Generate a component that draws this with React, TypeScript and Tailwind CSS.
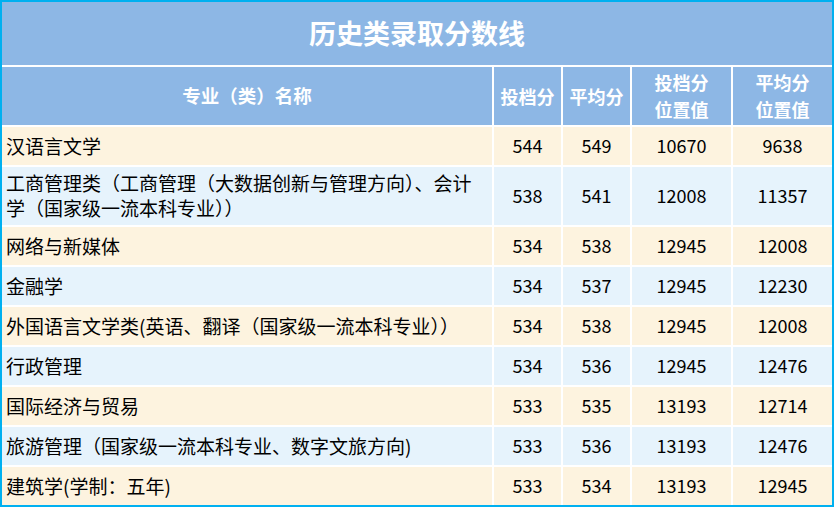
const rows = [
  { name: '汉语言文学', a: '544', b: '549', c: '10670', d: '9638' },
  { name: '工商管理类（工商管理（大数据创新与管理方向）、会计\n学（国家级一流本科专业））', a: '538', b: '541', c: '12008', d: '11357', tall: true },
  { name: '网络与新媒体', a: '534', b: '538', c: '12945', d: '12008' },
  { name: '金融学', a: '534', b: '537', c: '12945', d: '12230' },
  { name: '外国语言文学类(英语、翻译（国家级一流本科专业））', a: '534', b: '538', c: '12945', d: '12008' },
  { name: '行政管理', a: '534', b: '536', c: '12945', d: '12476' },
  { name: '国际经济与贸易', a: '533', b: '535', c: '13193', d: '12714' },
  { name: '旅游管理（国家级一流本科专业、数字文旅方向)', a: '533', b: '536', c: '13193', d: '12476' },
  { name: '建筑学(学制：五年)', a: '533', b: '534', c: '13193', d: '12945' },
];

export default function App() {
  return (
    <div className="w-[834px] h-[507px] border-2 border-[#00b0f0] bg-white"
      style={{ fontFamily: '"Microsoft YaHei", "Noto Sans CJK SC", sans-serif' }}>
      <div className="grid grid-cols-[490px_67px_67px_99px_99px] gap-[2px]">
        <div className="col-span-5 h-[63px] bg-[#8db7e5] flex items-center justify-center text-white text-[27px] font-bold">
          历史类录取分数线
        </div>

        {/* header */}
        <div className="h-[58px] bg-[#8db7e5] flex items-center justify-center text-white text-[18.5px] font-bold">专业（类）名称</div>
        <div className="h-[58px] bg-[#8db7e5] flex items-center justify-center text-white text-[18px] font-bold">投档分</div>
        <div className="h-[58px] bg-[#8db7e5] flex items-center justify-center text-white text-[18px] font-bold">平均分</div>
        <div className="h-[58px] bg-[#8db7e5] flex items-center justify-center text-center text-white text-[18px] font-bold leading-[27px]">投档分<br />位置值</div>
        <div className="h-[58px] bg-[#8db7e5] flex items-center justify-center text-center text-white text-[18px] font-bold leading-[27px]">平均分<br />位置值</div>

        {rows.map((r, i) => {
          const bg = i % 2 === 0 ? 'bg-[#fdf3df]' : 'bg-[#e6f3fc]';
          const h = r.tall ? 'h-[58px]' : 'h-[38px]';
          return [
            <div key={i + 'n'} className={`${bg} ${h} flex items-center pl-[4px] pr-[4px] pb-[2px] text-[19px] leading-[25px] text-black whitespace-pre-line`}>{r.name}</div>,
            <div key={i + 'a'} className={`${bg} ${h} flex items-center justify-center pb-[2px] text-[18px] text-black`}>{r.a}</div>,
            <div key={i + 'b'} className={`${bg} ${h} flex items-center justify-center pb-[2px] text-[18px] text-black`}>{r.b}</div>,
            <div key={i + 'c'} className={`${bg} ${h} flex items-center justify-center pb-[2px] text-[18px] text-black`}>{r.c}</div>,
            <div key={i + 'd'} className={`${bg} ${h} flex items-center justify-center pb-[2px] text-[18px] text-black`}>{r.d}</div>,
          ];
        })}
      </div>
    </div>
  );
}
